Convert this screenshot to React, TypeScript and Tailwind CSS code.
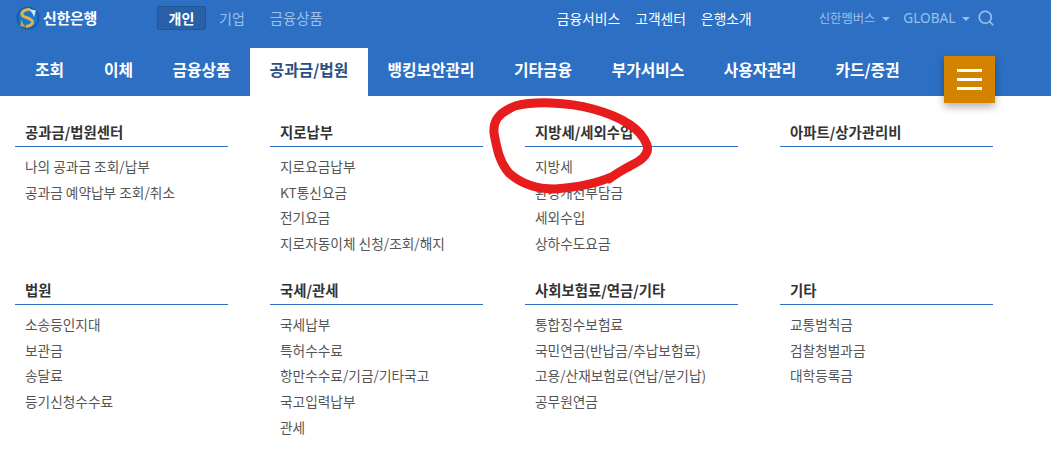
import React from 'react';
import { Search } from 'lucide-react';

const font = { fontFamily: '"Noto Sans CJK KR", "Noto Sans", sans-serif' };

const navItems = [
  { label: '조회', cls: 'w-[69px]' },
  { label: '이체', cls: 'w-[69px]' },
  { label: '금융상품', cls: 'w-[97px]' },
  { label: '공과금/법원', cls: 'w-[118px]', active: true },
  { label: '뱅킹보안관리', cls: 'w-[126px]' },
  { label: '기타금융', cls: 'w-[98px]' },
  { label: '부가서비스', cls: 'w-[112px]' },
  { label: '사용자관리', cls: 'w-[112px]' },
  { label: '카드/증권', cls: 'w-[103px]' },
];

const rows = [
  {
    cls: 'h-[158px]',
    cols: [
      { title: '공과금/법원센터', items: ['나의 공과금 조회/납부', '공과금 예약납부 조회/취소'] },
      { title: '지로납부', items: ['지로요금납부', 'KT통신요금', '전기요금', '지로자동이체 신청/조회/해지'] },
      { title: '지방세/세외수입', items: ['지방세', '환경개선부담금', '세외수입', '상하수도요금'] },
      { title: '아파트/상가관리비', items: [] },
    ],
  },
  {
    cls: 'h-[170px]',
    cols: [
      { title: '법원', items: ['소송등인지대', '보관금', '송달료', '등기신청수수료'] },
      { title: '국세/관세', items: ['국세납부', '특허수수료', '항만수수료/기금/기타국고', '국고입력납부', '관세'] },
      { title: '사회보험료/연금/기타', items: ['통합징수보험료', '국민연금(반납금/추납보험료)', '고용/산재보험료(연납/분기납)', '공무원연금'] },
      { title: '기타', items: ['교통범칙금', '검찰청벌과금', '대학등록금'] },
    ],
  },
];

const Caret = () => (
  <span className="ml-[7px] mt-[1px] h-0 w-0 border-x-[4px] border-t-[4px] border-x-transparent border-t-[#9cc0ea]" />
);

const Logo = () => (
  <svg width="24" height="24" viewBox="0 0 24 24">
    <circle cx="12" cy="12" r="11.5" fill="#175fa8" />
    <circle cx="12" cy="12" r="9.5" fill="#1a78cc" />
    <path d="M14 3.5C9 3 5.5 5.5 6 8.5 6.5 12 15.5 11.5 16.5 15.5 17 18 14 20 10 20.5" fill="none" stroke="#e3b04e" strokeWidth="3" />
    <path d="M13 3l7 1.5-2 6.5-1.5-3.5z" fill="#d5e8f7" />
    <path d="M10 21.5L4 20l1.5-6 1.5 3.5z" fill="#d19f3f" />
  </svg>
);

const App = () => {
  return (
    <div className="relative h-[451px] w-[1051px] overflow-hidden bg-white" style={font}>
      {/* top bar */}
      <div className="flex h-[48px] items-center bg-[#2d6fc3] pb-[12px] text-[14px]">
        <div className="ml-[16px] flex w-[141px] items-center">
          <Logo />
          <span className="ml-[3px] text-[15px] font-bold tracking-[-0.3px] text-white">신한은행</span>
        </div>
        <span className="flex h-[24px] w-[49px] items-center justify-center rounded-[2px] border border-[#22569b] bg-[#2a60a8] font-bold text-white">개인</span>
        <span className="ml-[13px] text-[#9cc0ea]">기업</span>
        <span className="ml-[25px] text-[14.4px] text-[#9cc0ea]">금융상품</span>
        <div className="ml-[234px] flex items-center gap-[15px] text-[13.8px] text-white">
          <span>금융서비스</span>
          <span>고객센터</span>
          <span>은행소개</span>
        </div>
        <span className="ml-[67px] text-[12.3px] text-[#9cc0ea]">신한멤버스</span>
        <Caret />
        <span className="ml-[13px] text-[13.6px] text-[#9cc0ea]" style={{ fontFamily: '"Noto Sans", sans-serif' }}>GLOBAL</span>
        <Caret />
        <Search className="ml-[7px] text-[#9cc0ea]" size={18} strokeWidth={2.2} />
      </div>

      {/* main nav */}
      <div className="flex h-[48px] bg-[#2d6fc3] pl-[15px] text-[15.8px] font-bold">
        {navItems.map((item) => (
          <div
            key={item.label}
            className={`flex items-center justify-center pb-[4px] ${item.cls} ${item.active ? 'bg-white text-[#2b4f82]' : 'text-white'}`}
          >
            {item.label}
          </div>
        ))}
      </div>

      {/* menu button */}
      <div className="absolute left-[944px] top-[56px] flex h-[47px] w-[51px] flex-col items-center justify-center gap-[6px] bg-[#d48300] shadow-[0_4px_8px_rgba(0,0,0,0.3)]">
        <span className="h-[3px] w-[25px] bg-white" />
        <span className="h-[3px] w-[25px] bg-white" />
        <span className="h-[3px] w-[25px] bg-white" />
      </div>

      {/* sub menu */}
      <div className="pl-[15px] pt-[25px]">
        {rows.map((row, i) => (
          <div key={i} className={`grid grid-cols-[213px_213px_213px_213px] gap-x-[42px] ${row.cls}`}>
            {row.cols.map((col) => (
              <div key={col.title}>
                <div className="flex h-[26px] items-center border-b border-[#2d6fc3] pb-[2px] pl-[10px] text-[14.4px] font-bold leading-none text-[#333]">
                  {col.title}
                </div>
                <ul className="pt-[6.5px] text-[13.7px] text-[#555]">
                  {col.items.map((item) => (
                    <li key={item} className="flex h-[25.7px] items-center pl-[10px]">
                      {item}
                    </li>
                  ))}
                </ul>
              </div>
            ))}
          </div>
        ))}
      </div>

      {/* red hand-drawn circle */}
      <svg className="absolute left-[485px] top-[95px]" width="175" height="105" viewBox="0 0 175 105" fill="none">
        <path
          d="M126 82C115 87 95 92 70 94C50 94 35 88 24 78C15 68 12 55 9 38C8 25 14 18 30 11C50 6 82 7 108 14C134 21 156 33 162 50C165 60 155 66 145 71C138 75 132 78 124 84"
          stroke="#e71c1c"
          strokeWidth="9"
          strokeLinecap="round"
          strokeLinejoin="round"
        />
      </svg>
    </div>
  );
};

export default App;
